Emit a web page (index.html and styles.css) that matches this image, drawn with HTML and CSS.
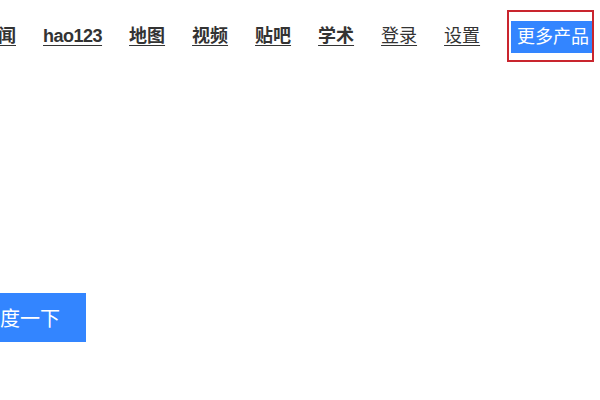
FILE: index.html
```html
<!DOCTYPE html>
<html lang="zh-CN">
<head>
<meta charset="utf-8">
<title>百度一下</title>
<link rel="stylesheet" href="styles.css">
</head>
<body>
<div class="page">
  <nav class="topnav">
    <a class="nav-link bold" href="#">新闻</a>
    <a class="nav-link bold latin" href="#">hao123</a>
    <a class="nav-link bold" href="#">地图</a>
    <a class="nav-link bold" href="#">视频</a>
    <a class="nav-link bold" href="#">贴吧</a>
    <a class="nav-link bold" href="#">学术</a>
    <a class="nav-link" href="#">登录</a>
    <a class="nav-link" href="#">设置</a>
    <div class="highlight">
      <a class="more-btn" href="#">更多产品</a>
    </div>
  </nav>
  <div class="search-row">
    <button class="search-btn" type="button">百度一下</button>
  </div>
</div>
</body>
</html>
```
FILE: styles.css
```css
html, body {
  margin: 0;
  padding: 0;
  background: #ffffff;
  overflow: hidden;
}
body {
  width: 600px;
  height: 400px;
  font-family: "Liberation Sans", Arial, "Noto Sans CJK SC", sans-serif;
}
.page {
  display: flex;
  flex-direction: column;
}
.topnav {
  display: flex;
  align-items: center;
  gap: 27px;
  padding-top: 10px;
  margin-left: -20px;
  white-space: nowrap;
}
.nav-link {
  font-size: 18px;
  line-height: 24px;
  color: #333333;
  text-decoration: underline;
  text-underline-offset: 3px;
}
.nav-link.bold {
  font-weight: bold;
}
.nav-link.latin {
  letter-spacing: -0.5px;
}
.highlight {
  border: 2px solid #c9252e;
  width: 87px;
  height: 52px;
  padding: 9px 0 0 2px;
  box-sizing: border-box;
  display: flex;
  align-items: flex-start;
  overflow: hidden;
}
.more-btn {
  display: block;
  flex: none;
  width: 81px;
  height: 32px;
  line-height: 32px;
  padding-left: 6px;
  box-sizing: border-box;
  background: #3385ff;
  color: #ffffff;
  font-size: 18px;
  text-decoration: none;
}
.search-row {
  display: flex;
  margin-top: 231px;
  margin-left: -46px;
}
.search-btn {
  width: 132px;
  height: 49px;
  border: 0;
  margin: 0;
  padding: 0;
  background: #3385ff;
  color: #ffffff;
  font-size: 20px;
  font-family: "Liberation Sans", Arial, "Noto Sans CJK SC", sans-serif;
  cursor: pointer;
}
```
